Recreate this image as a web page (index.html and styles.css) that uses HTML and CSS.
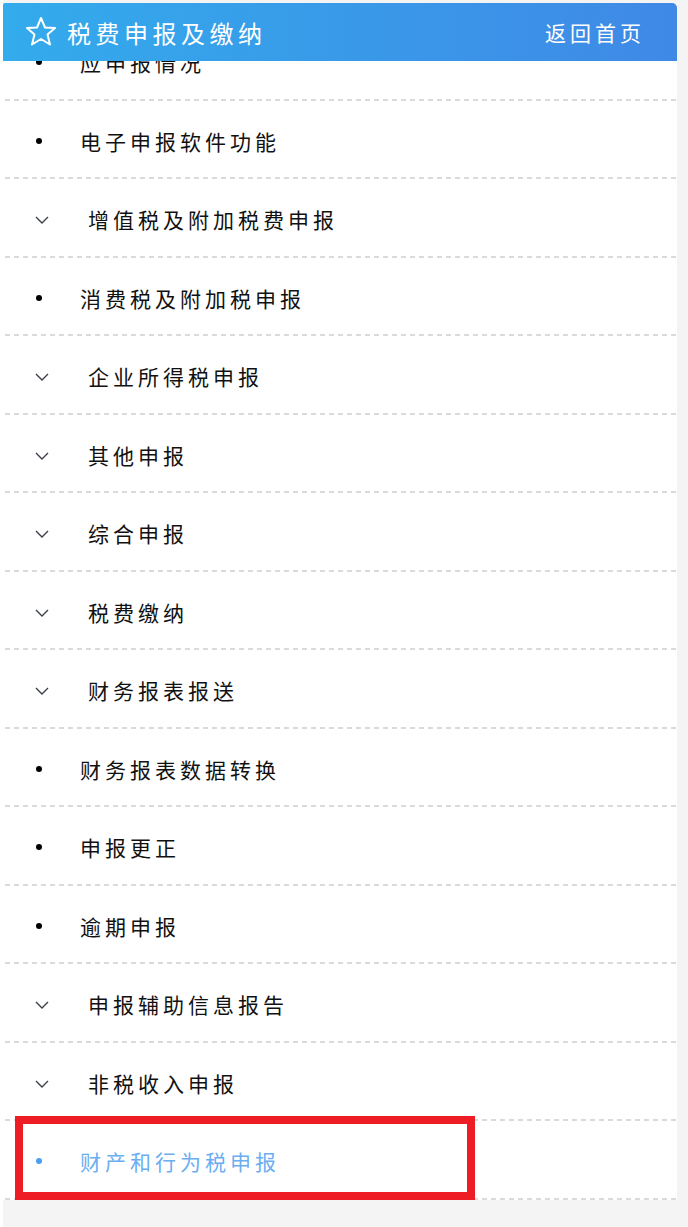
FILE: index.html
```
<!DOCTYPE html>
<html lang="zh-CN">
<head>
    <meta charset="UTF-8">
    <meta name="viewport" content="width=device-width, initial-scale=1.0">
    <title>税费申报及缴纳</title>
    <link rel="stylesheet" href="styles.css">
</head>
<body>
    <div class="header">
        <div class="title">
            <svg class="star" width="32" height="30" viewBox="0 0 32 30">
                <polygon points="16,2 20,11.5 30,12 22.5,18.5 25,28.5 16,23 7,28.5 9.5,18.5 2,12 12,11.5" fill="none" stroke="#fff" stroke-width="2" stroke-linejoin="round"/>
            </svg>
            <span>税费申报及缴纳</span>
        </div>
        <a class="home" href="#">返回首页</a>
    </div>

    <ul class="menu">
        <li class="item leaf"><span class="dot"></span>应申报情况</li>
        <li class="item leaf"><span class="dot"></span>电子申报软件功能</li>
        <li class="item group"><span class="arrow"><svg width="14" height="8" viewBox="0 0 14 8"><polyline points="1,1 7,7 13,1" fill="none" stroke="#3a3f4a" stroke-width="1.4"/></svg></span>增值税及附加税费申报</li>
        <li class="item leaf"><span class="dot"></span>消费税及附加税申报</li>
        <li class="item group"><span class="arrow"><svg width="14" height="8" viewBox="0 0 14 8"><polyline points="1,1 7,7 13,1" fill="none" stroke="#3a3f4a" stroke-width="1.4"/></svg></span>企业所得税申报</li>
        <li class="item group"><span class="arrow"><svg width="14" height="8" viewBox="0 0 14 8"><polyline points="1,1 7,7 13,1" fill="none" stroke="#3a3f4a" stroke-width="1.4"/></svg></span>其他申报</li>
        <li class="item group"><span class="arrow"><svg width="14" height="8" viewBox="0 0 14 8"><polyline points="1,1 7,7 13,1" fill="none" stroke="#3a3f4a" stroke-width="1.4"/></svg></span>综合申报</li>
        <li class="item group"><span class="arrow"><svg width="14" height="8" viewBox="0 0 14 8"><polyline points="1,1 7,7 13,1" fill="none" stroke="#3a3f4a" stroke-width="1.4"/></svg></span>税费缴纳</li>
        <li class="item group"><span class="arrow"><svg width="14" height="8" viewBox="0 0 14 8"><polyline points="1,1 7,7 13,1" fill="none" stroke="#3a3f4a" stroke-width="1.4"/></svg></span>财务报表报送</li>
        <li class="item leaf"><span class="dot"></span>财务报表数据转换</li>
        <li class="item leaf"><span class="dot"></span>申报更正</li>
        <li class="item leaf"><span class="dot"></span>逾期申报</li>
        <li class="item group"><span class="arrow"><svg width="14" height="8" viewBox="0 0 14 8"><polyline points="1,1 7,7 13,1" fill="none" stroke="#3a3f4a" stroke-width="1.4"/></svg></span>申报辅助信息报告</li>
        <li class="item group"><span class="arrow"><svg width="14" height="8" viewBox="0 0 14 8"><polyline points="1,1 7,7 13,1" fill="none" stroke="#3a3f4a" stroke-width="1.4"/></svg></span>非税收入申报</li>
        <li class="item leaf active"><span class="dot"></span>财产和行为税申报<span class="mark"></span></li>
    </ul>
</body>
</html>
```

FILE: styles.css
```
body {
    margin: 0;
    background-color: #f4f4f4;
    border-left: 3px solid #fff;
    font-family: "Noto Sans CJK SC", "Noto Sans", sans-serif;
    height: 1227px;
    box-sizing: border-box;
}

/* 顶部标题栏（固定在列表上方） */
.header {
    position: absolute;
    top: 3px;
    left: 3px;
    width: 674px;
    height: 58px;
    display: flex;
    align-items: center;
    justify-content: space-between;
    background: linear-gradient(to right, #33abec, #3f89e6);
    border-radius: 2px 5px 0 0;
    color: #fff;
    z-index: 2;
}

.title {
    display: flex;
    align-items: center;
    padding-left: 22px;
    font-size: 24px;
    letter-spacing: 4.5px;
}

.star {
    margin-right: 10px;
    margin-top: -2px;
}

.home {
    color: #fff;
    text-decoration: none;
    font-size: 21px;
    letter-spacing: 4px;
    padding-right: 32px;
}

.menu {
    list-style: none;
    margin: 0;
    padding: 22px 0 0 0;
    width: 674px;
}

.item {
    position: relative;
    display: flex;
    align-items: center;
    height: 76.5px;
    padding-top: 2px;
    padding-left: 32px;
    background: #fff;
    font-size: 21px;
    letter-spacing: 4px;
    color: #111;
    background-image: repeating-linear-gradient(to right, #dadada 0 5px, transparent 5px 9px);
    background-size: 672px 2px;
    background-position: 2px bottom;
    background-repeat: no-repeat;
}

.dot {
    display: inline-block;
    width: 6px;
    height: 6px;
    border-radius: 50%;
    background: #000;
    margin-left: 1px;
    margin-right: 38px;
}

.arrow {
    display: inline-flex;
    width: 14px;
    margin-right: 39px;
    margin-top: 2px;
}

.active {
    color: #6aaef2;
}

.active .dot {
    background: #4a9ff0;
}

/* 红色标注框 */
.mark {
    position: absolute;
    left: 12px;
    top: -5px;
    width: 460px;
    height: 84px;
    border: 8px solid #ee1c25;
    box-sizing: border-box;
}
```
